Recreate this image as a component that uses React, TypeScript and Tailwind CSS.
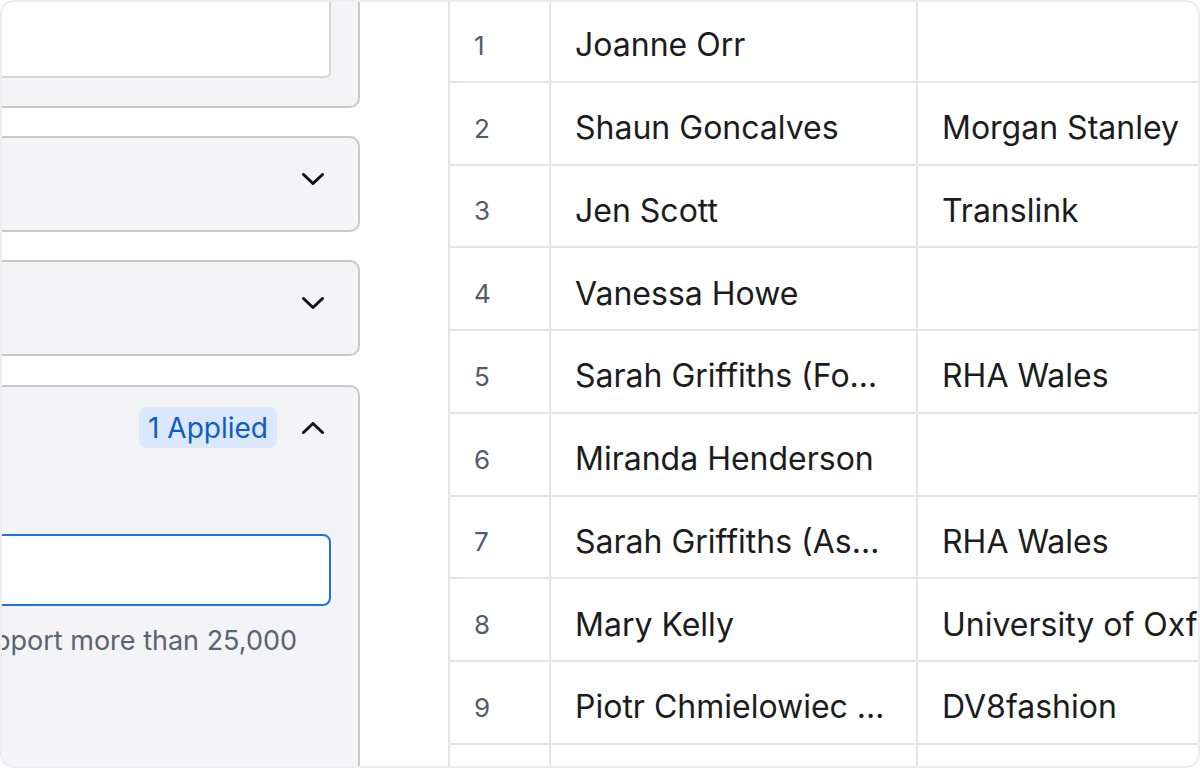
import React from "react";

// rows shown in the contacts table
const rows = [
  { id: 1, name: "Joanne Orr", company: "" },
  { id: 2, name: "Shaun Goncalves", company: "Morgan Stanley" },
  { id: 3, name: "Jen Scott", company: "Translink" },
  { id: 4, name: "Vanessa Howe", company: "" },
  { id: 5, name: "Sarah Griffiths (Founder)", company: "RHA Wales" },
  { id: 6, name: "Miranda Henderson", company: "" },
  { id: 7, name: "Sarah Griffiths (Associate)", company: "RHA Wales" },
  { id: 8, name: "Mary Kelly", company: "University of Oxford" },
  { id: 9, name: "Piotr Chmielowiec (DV8)", company: "DV8fashion" },
  { id: 10, name: "", company: "" },
];

function Chevron({ up = false }: { up?: boolean }) {
  return (
    <svg width="22" height="12" viewBox="0 0 22 12" fill="none" className="shrink-0">
      <polyline
        points={up ? "1.5,10.5 11,1.5 20.5,10.5" : "1.5,1.5 11,10.5 20.5,1.5"}
        stroke="#111"
        strokeWidth="3"
        strokeLinecap="round"
        strokeLinejoin="round"
      />
    </svg>
  );
}

// collapsed filter section
function FilterCard() {
  return (
    <div className="-ml-[30px] h-[96px] shrink-0 rounded-[10px] border-2 border-[#c6c8ce] bg-[#f4f4f6] pt-[20px] pr-[34px]">
      <div className="flex h-[41px] items-center justify-end">
        <Chevron />
      </div>
    </div>
  );
}

function FilterPanel() {
  return (
    <div className="flex w-[358px] shrink-0 flex-col gap-7">
      {/* search card */}
      <div className="-ml-[30px] -mt-[40px] flex h-[146px] shrink-0 flex-col justify-end rounded-[10px] border-2 border-[#c6c8ce] bg-[#f4f4f6] pr-[27px] pb-7">
        <div className="h-[90px] rounded-[6px] border-2 border-[#d3d5db] bg-white" />
      </div>

      <FilterCard />
      <FilterCard />

      {/* expanded section with row limit */}
      <div className="-ml-[30px] mt-px h-[420px] shrink-0 rounded-[10px] border-2 border-[#c6c8ce] bg-[#f4f4f6] pt-[20px]">
        <div className="flex h-[41px] items-center justify-end gap-[25px] pr-[34px]">
          <span className="flex h-[41px] items-center rounded-[8px] bg-[#dbe7fc] px-[9px] text-[28px] text-[#0c5ebf]">
            1 Applied
          </span>
          <Chevron up />
        </div>
        <div className="mt-[86px] mr-[27px] h-[72px] rounded-[8px] border-2 border-[#1a73e8] bg-white" />
        <div className="mt-[15px] flex justify-end pr-[61px]">
          <p className="whitespace-nowrap text-[27px] text-[#5a6371]">
            Exports don't currently support more than 25,000
          </p>
        </div>
      </div>
    </div>
  );
}

function ContactsTable() {
  return (
    <div className="-mt-[2px] ml-[88px] flex-1 border-l-2 border-[#e4e5ea]">
      {rows.map((r) => (
        <div key={r.id} className="flex h-[82.75px] border-b-2 border-[#e4e5ea]">
          <div className="flex w-[101px] shrink-0 items-center border-r-2 border-[#e4e5ea] pt-[10px] pl-6 text-[26px] text-[#535b6a]">
            {r.name ? r.id : ""}
          </div>
          <div className="flex w-[367px] shrink-0 items-center border-r-2 border-[#e4e5ea] pt-[10px] pl-6 pr-[28px] text-[32px] text-[#1b1c20]">
            <span className="truncate">{r.name}</span>
          </div>
          <div className="flex flex-1 items-center whitespace-nowrap pt-[10px] pl-6 text-[32px] text-[#1b1c20]">
            {r.company}
          </div>
        </div>
      ))}
    </div>
  );
}

export default function App() {
  return (
    <div className="h-[768px] w-[1200px] bg-white" style={{ fontFamily: "Inter, 'Noto Sans', sans-serif" }}>
      <div className="flex h-full w-full overflow-hidden rounded-[14px] border-2 border-[#ededf1]">
        <FilterPanel />
        <ContactsTable />
      </div>
    </div>
  );
}
